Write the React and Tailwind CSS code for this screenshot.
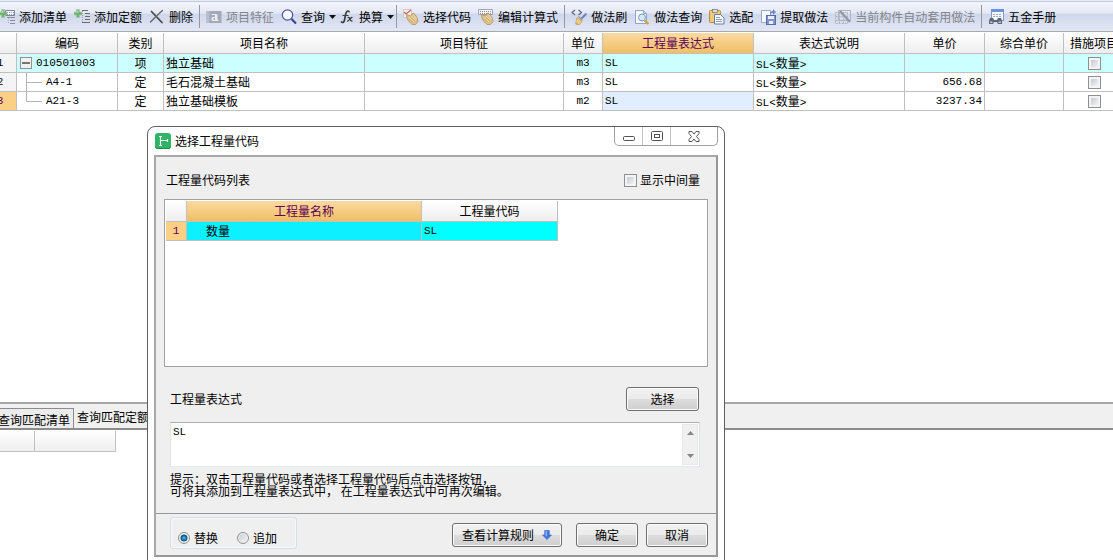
import { useState } from 'react'
import clsx from 'clsx'

// Toolbar icons
const AddListIcon = ({ plain }) => (
  <svg width="16" height="16" viewBox="0 0 16 16">
    {plain ? (
      <>
        <path d="M8 1.500h6 M11 4.500h5 M11 7.500h5 M11 10.500h5 M8 13.500h8" stroke="#6c6c6c" />
        <path d="M8.500 2v12" stroke="#a5a5a5" strokeDasharray="1 1" />
      </>
    ) : (
      <>
        <path d="M6.500 1.500h9v5h-9z" fill="#f4f6fb" stroke="#7d8494" />
        <path d="M8 3.500h7 M8 5.500h7" stroke="#8e95a6" strokeDasharray="1 1" />
        <path d="M8 8.500h8 M11 11.500h5 M11 14.500h5" stroke="#8a8f9c" />
        <path d="M9.500 9v6" stroke="#b5b9c4" strokeDasharray="1 1" />
      </>
    )}
    <path d="M2.500 0.500h3V3H8v3H5.500v2.500h-3V6H0V3h2.500z" fill="#6faf74" stroke="#a3cba5" strokeWidth="0.600" />
    <path d="M3 1.500h1.500V4H1V3.500h2z" fill="#a9d8ab" />
  </svg>
)

const DeleteIcon = () => (
  <svg width="16" height="16" viewBox="0 0 16 16" fill="none" strokeLinecap="round">
    <path d="M2.500 2.500L13 13.500" stroke="#4b4b4b" strokeWidth="1.800" />
    <path d="M13.500 1.500C9.500 5 5 9.500 1.500 13" stroke="#6b6b6b" strokeWidth="1.500" />
  </svg>
)

const FeatureIcon = () => (
  <svg width="16" height="16" viewBox="0 0 16 16">
    <rect x="0.500" y="2" width="15" height="12" fill="#a4a9b8" />
    <path d="M0.500 2h3v12h-3z" fill="#b9bdca" />
    <path d="M5.500 5h5l1 1v5h1v1h-6l-1-1V9l1-1h2.500V6h-3.500z M7.500 9v2h1.500V9z" fill="#eceef4" fillRule="evenodd" />
  </svg>
)

const SearchIcon = () => (
  <svg width="16" height="16" viewBox="0 0 16 16" fill="none">
    <circle cx="6.500" cy="6" r="5.200" fill="#f6f9ff" stroke="#4a50a8" strokeWidth="1.200" />
    <path d="M3.500 5.500A3 3 0 0 1 6.500 3" stroke="#fff" />
    <path d="M10.500 10l4.500 4.500" stroke="#343a94" strokeWidth="2" />
  </svg>
)

const FxIcon = () => (
  <svg width="16" height="16" viewBox="0 0 16 16" fill="none" stroke="#3d3d3d" strokeLinecap="round">
    <path d="M10 2.500C8 1.500 7 3 6.500 6L5.500 11C5 13.500 4 14 2.500 13" strokeWidth="1.700" />
    <path d="M4 6.500h5" strokeWidth="1.200" />
    <path d="M9 8.500c2-1 2 4 4 3.500 M13 8.500c-2 0-3 4-4.500 3.500" strokeWidth="1.300" />
  </svg>
)

const HandIcon = ({ keyboard }) => (
  <svg width="16" height="16" viewBox="0 0 16 16">
    {keyboard ? (
      <>
        <path d="M0.500 0.500h14v5h-14z" fill="#f2f4f8" stroke="#8d929e" strokeWidth="0.800" />
        <path d="M2 2.500h11 M2 4.500h11" stroke="#8a8f9c" strokeDasharray="1 1" />
      </>
    ) : (
      <>
        <path d="M0.500 0.500h8v8h-8z" fill="#f3eded" stroke="#c3b9b9" strokeWidth="0.600" />
        <path d="M1 3l2 2 5-4" fill="none" stroke="#d8604f" strokeWidth="1.200" />
      </>
    )}
    <path d="M3.500 5.500l4 1.500 2.500-3 2 1.500 2 3 1 4-2.500 3H9L5.500 12 4 9z" fill="#dfc08a" stroke="#ad8a52" strokeWidth="0.700" />
    <path d="M6 8.500l5 4.500 M8 7l4.500 4.500 M10.500 6l3 4" stroke="#f4e2bb" strokeWidth="0.800" />
    <path d="M6.500 10l3.500 3.500 M8 8.500l4 3.500" stroke="#ad8a52" strokeWidth="0.500" />
  </svg>
)

const BrushIcon = () => (
  <svg width="16" height="16" viewBox="0 0 16 16" fill="none">
    <path d="M4 1L1 3.500 4 6 M7.500 1l3 2.500-3 2.500" stroke="#5a6270" strokeWidth="1.100" />
    <path d="M15.500 4.500L10 10" stroke="#7283b8" strokeWidth="2" />
    <path d="M6 8.500l5 4-2.500 3H5.500l1-1.500-2 1z" fill="#efcb85" stroke="#c29a4f" strokeWidth="0.700" />
    <path d="M7.500 7.500l4 4" stroke="#9a9a9a" strokeWidth="1.500" />
  </svg>
)

const PageSearchIcon = () => (
  <svg width="16" height="16" viewBox="0 0 16 16">
    <path d="M1.500 1.500h8l3 3v10h-11z" fill="#f5f9ff" stroke="#8fa3c8" />
    <path d="M9.500 1.500v3h3" fill="#cbd9ef" stroke="#8fa3c8" />
    <circle cx="8" cy="8.500" r="3.500" fill="#d2eaf8" stroke="#7f97b5" />
    <path d="M10.500 11.500l4 3.500" stroke="#dc9a38" strokeWidth="2.200" />
  </svg>
)

const PasteIcon = () => (
  <svg width="16" height="16" viewBox="0 0 16 16">
    <rect x="0.500" y="1.500" width="11" height="12" rx="1" fill="#f0cb7a" stroke="#b58a3a" />
    <rect x="3.500" y="0.500" width="5" height="3" fill="#ddd" stroke="#777" strokeWidth="0.700" />
    <path d="M5.500 5.500h6l3.500 3.500v6H5.500z" fill="#f3f7fd" stroke="#6f7f9c" />
    <path d="M7 8.500h4 M7 10.500h6 M7 12.500h6" stroke="#8fa0be" />
  </svg>
)

const ExtractIcon = () => (
  <svg width="16" height="16" viewBox="0 0 16 16">
    <path d="M1.500 1.500h9v12h-9z" fill="#f5f8fe" stroke="#9aa8ca" />
    <rect x="6.500" y="6.500" width="9" height="9" fill="#8395cc" stroke="#5a6ba4" />
    <path d="M8 7h6v3H8z M9 12h4v3H9z" fill="#e9eefb" />
    <path d="M10 5c0-2 1-3 3-3V0l3 3-3 3V4c-1 0-2 0-3 1z" fill="#6f86c8" />
  </svg>
)

const AutoApplyIcon = () => (
  <svg width="16" height="16" viewBox="0 0 16 16" fill="none" stroke="#b0b2ba">
    <path d="M3.500 1.500h12v10h-12z" />
    <path d="M0.500 3.500h12v11h-12z M0.500 7.500h12 M0.500 11.500h12 M4.500 3.500v11 M8.500 3.500v11" strokeDasharray="2 1" />
    <path d="M5 2l10 11" stroke="#94979f" strokeWidth="2.200" />
  </svg>
)

const HandbookIcon = () => (
  <svg width="16" height="16" viewBox="0 0 16 16">
    <rect x="3.500" y="0.500" width="12" height="11" fill="#f3f7fd" stroke="#7f9bd0" />
    <path d="M3 0h13v3H3z" fill="#6f93d8" />
    <path d="M5 5.500h9 M5 7.500h9" stroke="#9cacca" strokeDasharray="2 1" />
    <path d="M2 9h3l1 2h3l1-2h3l1 3v3h-4l-1-2H6l-1 2H1v-3z" fill="#5c6675" />
    <path d="M2 12.500h2.500V14H2z M10.500 12.500H13V14h-2.500z" fill="#c3ccd9" />
  </svg>
)

const Caret = () => (
  <svg className="-mr-1" width="7" height="4" viewBox="0 0 7 4">
    <path d="M0 0h7L3.500 4z" fill="#111" />
  </svg>
)

const AppIcon = () => (
  <svg width="16" height="16" viewBox="0 0 16 16">
    <rect width="16" height="16" rx="3" fill="#2fb566" />
    <path d="M0 12.500A3 3 0 0 0 3 16h10a3 3 0 0 0 3-3.500A3 3 0 0 1 13 15H3a3 3 0 0 1-3-2.500z" fill="#1f8f4c" />
    <path d="M5.500 3v10 M4 3.500h3 M4 12.500h3 M5.500 7.500h7 M12.500 6v3" stroke="#f2fff6" strokeWidth="1.200" fill="none" />
  </svg>
)

const toolbar = [
  { label: '添加清单', icon: <AddListIcon /> },
  { label: '添加定额', icon: <AddListIcon plain /> },
  { label: '删除', icon: <DeleteIcon /> },
  null,
  { label: '项目特征', icon: <FeatureIcon />, disabled: true },
  { label: '查询', icon: <SearchIcon />, menu: true },
  { label: '换算', icon: <FxIcon />, menu: true },
  null,
  { label: '选择代码', icon: <HandIcon /> },
  { label: '编辑计算式', icon: <HandIcon keyboard /> },
  null,
  { label: '做法刷', icon: <BrushIcon /> },
  { label: '做法查询', icon: <PageSearchIcon /> },
  { label: '选配', icon: <PasteIcon /> },
  { label: '提取做法', icon: <ExtractIcon /> },
  { label: '当前构件自动套用做法', icon: <AutoApplyIcon />, disabled: true },
  null,
  { label: '五金手册', icon: <HandbookIcon /> }
]

const columns = [
  { title: '', width: 'w-[33px]' },
  { title: '编码', width: 'w-[101px]' },
  { title: '类别', width: 'w-[46px]' },
  { title: '项目名称', width: 'w-[201px]' },
  { title: '项目特征', width: 'w-[199px]' },
  { title: '单位', width: 'w-[39px]' },
  { title: '工程量表达式', width: 'w-[151px]', active: true },
  { title: '表达式说明', width: 'w-[151px]' },
  { title: '单价', width: 'w-[80px]' },
  { title: '综合单价', width: 'w-[79px]' },
  { title: '措施项目', width: 'w-[61px]' }
]

const rows = [
  { code: '010501003', type: '项', name: '独立基础', unit: 'm3', price: '', root: true },
  { code: 'A4-1', type: '定', name: '毛石混凝土基础', unit: 'm3', price: '656.68' },
  { code: 'A21-3', type: '定', name: '独立基础模板', unit: 'm2', price: '3237.34', last: true }
]

const headCell = 'border-r border-b border-[#c0c0c0] bg-linear-to-b from-white to-[#eeeeee] p-0 font-normal'
const activeHead = 'border-r border-b border-[#c0c0c0] bg-linear-to-b from-[#fbd9a0] to-[#f0bf62] p-0 font-normal text-[#5c0058]'
const cell = 'border-r border-b border-[#c0c0c0] px-0.5 py-0'
const mono = "font-['Liberation_Mono',monospace] text-[11px] leading-3"
const pushButton =
  'flex h-6 items-center justify-center rounded-[3px] border border-[#707070] bg-[linear-gradient(#f2f2f2_0%,#ebebeb_50%,#dddddd_50%,#cfcfcf_100%)] shadow-[inset_0_0_0_1px_#fafafa]'
const tick =
  'size-[13px] appearance-none border border-[#8e8f8f] bg-linear-to-br from-[#b9c0cc] to-[#ffffff] shadow-[inset_0_0_0_2px_#f4f4f4] checked:bg-[#4a5f97]'
const radio =
  'size-3 appearance-none rounded-full border border-[#8e8f8f] bg-linear-to-br from-[#c8cdd2] to-[#f6f6f6] shadow-[inset_0_0_0_1px_#f4f4f4] checked:bg-[radial-gradient(circle,#4fc3ee_0,#0b4f86_3px,#e8ecef_4px)]'

const Toolbar = () => (
  <div className="h-8 shrink-0 overflow-hidden border-b border-[#a9a9ad] bg-[linear-gradient(#f6f8fd_0%,#e3e8f5_42%,#cfd7eb_46%,#e2e7f5_100%)]">
    <div className="h-0.5 border-b border-[#c3cbe0] bg-[#e6ebf7]" />
    <div role="toolbar" className="-ml-px flex h-[29px] items-center gap-[7px]">
      {toolbar.map((item, index) =>
        item ? (
          <button
            key={item.label}
            type="button"
            disabled={item.disabled}
            className={clsx('flex shrink-0 items-center gap-1 whitespace-nowrap', item.disabled && 'text-[#85858a]')}
          >
            {item.icon}
            {item.label}
            {item.menu && <Caret />}
          </button>
        ) : (
          <div key={index} className="-mx-px h-[23px] w-px shrink-0 bg-[#98989c]" />
        )
      )}
    </div>
  </div>
)

const TreeCell = ({ row }) => {
  if (row.root) {
    return (
      <div className="flex h-[18px] items-center gap-1 pl-px">
        <button type="button" aria-label="折叠" className="shrink-0">
          <svg width="12" height="12" viewBox="0 0 12 12" className="block">
            <rect x="0.500" y="0.500" width="11" height="11" fill="#f0f0f0" stroke="#919191" />
            <path d="M2 6h8" stroke="#222" strokeWidth="1.200" />
          </svg>
        </button>
        <span className={mono}>{row.code}</span>
      </div>
    )
  }
  return (
    <div className="flex h-[18px] items-center gap-1 pl-[7px]">
      <svg width="16" height="18" viewBox="0 0 16 18" fill="none" stroke="#b4b4b4">
        <path d={row.last ? 'M0.500 0v9.500H16' : 'M0.500 0v18 M0.500 9.500H16'} />
      </svg>
      <span className={mono}>{row.code}</span>
    </div>
  )
}

const ItemTable = () => (
  <div className="min-h-0 flex-1 overflow-hidden pt-px">
    <table className="-ml-4 w-[1125px] min-w-full table-fixed border-separate border-spacing-0">
      <thead>
        <tr className="h-[21px]">
          {columns.map((col, index) => (
            <th key={index} className={clsx(col.width, 'whitespace-nowrap', col.active ? activeHead : headCell)}>
              {col.title}
            </th>
          ))}
        </tr>
      </thead>
      <tbody>
        {rows.map((row, index) => (
          <tr key={row.code} className={clsx('h-[19px]', row.root && 'bg-[#ccffff]')}>
            <th className={clsx(cell, mono, 'font-normal', row.last ? 'bg-[#fccf86] text-[#5c0058]' : 'bg-[#f4f4f4]')}>
              {index + 1}
            </th>
            <td className={cell}>
              <TreeCell row={row} />
            </td>
            <td className={clsx(cell, 'text-center')}>{row.type}</td>
            <td className={cell}>{row.name}</td>
            <td className={cell} />
            <td className={clsx(cell, mono, 'text-center')}>{row.unit}</td>
            <td className={clsx(cell, mono, row.last && 'bg-[#e0eeff]')}>SL</td>
            <td className={cell}>
              <span className={mono}>SL&lt;</span>数量<span className={mono}>&gt;</span>
            </td>
            <td className={clsx(cell, mono, 'text-right')}>{row.price}</td>
            <td className={cell} />
            <td className={cell}>
              <input type="checkbox" aria-label="措施项目" className={clsx(tick, 'mx-auto block')} />
            </td>
          </tr>
        ))}
      </tbody>
    </table>
  </div>
)

const QueryPanel = () => (
  <div className="h-[158px] shrink-0 border-t-2 border-[#a6a6a8]">
    <div className="flex h-[26px] items-end border-b-2 border-[#8c8c8e] bg-[#f0f0f0]">
      <button type="button" className="-ml-1 h-5 border-t border-r border-[#8c8c8e] bg-[#ececec] pt-0.5 pr-[3px] pl-0.5">
        查询匹配清单
      </button>
      <button type="button" className="h-6 px-[3px] pt-0.5">
        查询匹配定额
      </button>
    </div>
    <div className="flex h-[22px] pt-px">
      <div className={clsx(headCell, 'w-[35px]')} />
      <div className={clsx(headCell, 'w-[81px]')} />
    </div>
  </div>
)

const WindowButtons = () => (
  <div className="flex h-[19px] rounded-b-[5px] border border-t-0 border-[#a0a0a4]">
    <button type="button" aria-label="最小化" className="flex w-7 items-center justify-center border-r border-[#c4c4c8]">
      <svg width="12" height="5" viewBox="0 0 12 5" className="mt-1">
        <rect x="0.500" y="0.500" width="11" height="4" rx="1" fill="#fff" stroke="#50505e" />
      </svg>
    </button>
    <button type="button" aria-label="最大化" className="flex w-7 items-center justify-center border-r border-[#c4c4c8]">
      <svg width="12" height="10" viewBox="0 0 12 10" fill="#fff" stroke="#50505e">
        <rect x="0.500" y="0.500" width="11" height="9" rx="1" />
        <rect x="3.500" y="3.500" width="5" height="3" />
      </svg>
    </button>
    <button type="button" aria-label="关闭" className="flex w-[46px] items-center justify-center">
      <svg width="12" height="11" viewBox="0 0 12 11">
        <path
          d="M1 .500h3L6 3 8 .500h3v2L8.500 5.500 11 8.500v2H8L6 8l-2 2.500H1v-2l2.500-3L1 2.500z"
          fill="#fff"
          stroke="#50505e"
          strokeLinejoin="round"
        />
      </svg>
    </button>
  </div>
)

const CodeDialog = () => {
  const [mode, setMode] = useState('replace')
  const [expression, setExpression] = useState('SL')

  return (
    <div
      role="dialog"
      aria-labelledby="dialog-title"
      className="absolute top-[126px] left-[147px] w-[578px] rounded-t-lg border border-[#5f5f62] bg-white px-1.5 pb-1.5"
    >
      <div className="flex h-7 justify-between">
        <div className="flex items-center gap-1 pl-px">
          <AppIcon />
          <h2 id="dialog-title">选择工程量代码</h2>
        </div>
        <WindowButtons />
      </div>

      <div className="border-2 border-t-[#a8a8a8] border-r-[#979797] border-b-[#979797] border-l-[#a8a8a8] bg-[#efefef]">
        <div className="px-2 pt-[13px]">
          <div className="flex h-5 items-center justify-between pr-2 pl-0.5">
            <h3>工程量代码列表</h3>
            <label className="flex items-center gap-[3px]">
              <input type="checkbox" className={tick} />
              显示中间量
            </label>
          </div>

          <div className="mt-[9px] mb-5 h-[168px] border border-[#a2a2a6] bg-white p-px">
            <table className="table-fixed border-separate border-spacing-0">
              <thead>
                <tr className="h-[21px]">
                  <th className={clsx(headCell, 'w-[21px]')} />
                  <th className={clsx(activeHead, 'w-[235px]')}>工程量名称</th>
                  <th className={clsx(headCell, 'w-[136px]')}>工程量代码</th>
                </tr>
              </thead>
              <tbody>
                <tr className="h-[19px]">
                  <th className={clsx(cell, mono, 'bg-[#fccf86] font-normal text-[#5c0058]')}>1</th>
                  <td className={clsx(cell, 'bg-[#0cf0ff]')}>
                    <span className="pl-[17px]">数量</span>
                  </td>
                  <td className={clsx(cell, mono, 'bg-[#00ffff]')}>SL</td>
                </tr>
              </tbody>
            </table>
          </div>

          <div className="flex h-6 items-center justify-between pr-[9px] pl-1.5">
            <label htmlFor="expression">工程量表达式</label>
            <button type="button" className={clsx(pushButton, 'w-[73px]')}>
              选择
            </button>
          </div>

          <div className="mt-[11px] mr-2 ml-1.5 flex h-[45px] border border-t-[#abadb3] border-r-[#dbdfe6] border-b-[#e3e9ef] border-l-[#e2e3ea] bg-white p-px">
            <textarea
              id="expression"
              value={expression}
              onChange={(e) => setExpression(e.target.value)}
              className={clsx(mono, 'min-w-0 flex-1 resize-none px-px py-0.5 outline-none')}
            />
            <div className="flex w-4 flex-col items-center justify-between border border-[#e8e8e8] bg-[#f0f0f0] py-1.5">
              <button type="button" aria-label="向上">
                <svg width="7" height="4" viewBox="0 0 7 4" className="block">
                  <path d="M0 4h7L3.500 0z" fill="#868686" />
                </svg>
              </button>
              <button type="button" aria-label="向下">
                <svg width="7" height="4" viewBox="0 0 7 4" className="block">
                  <path d="M0 0h7L3.500 4z" fill="#868686" />
                </svg>
              </button>
            </div>
          </div>

          <p className="mt-1.5 mb-4 ml-1.5 leading-3">
            提示：双击工程量代码或者选择工程量代码后点击选择按钮，
            <br />
            可将其添加到工程量表达式中， 在工程量表达式中可再次编辑。
          </p>
        </div>

        <div className="flex items-center justify-between border-t border-[#979797] pt-[3px] pr-2 pb-1.5 pl-3.5">
          <div className="flex h-8 w-[127px] items-end gap-[19px] rounded-[3px] border border-[#d3dee8] pb-0.5 pl-[7px] shadow-[inset_0_0_0_1px_#f8f8f8]">
            <label className="flex items-center gap-1">
              <input
                type="radio"
                name="mode"
                className={radio}
                checked={mode === 'replace'}
                onChange={() => setMode('replace')}
              />
              替换
            </label>
            <label className="flex items-center gap-1">
              <input
                type="radio"
                name="mode"
                className={radio}
                checked={mode === 'append'}
                onChange={() => setMode('append')}
              />
              追加
            </label>
          </div>
          <div className="flex pt-1">
            <button type="button" className={clsx(pushButton, 'mr-3.5 w-[110px] gap-2')}>
              查看计算规则
              <svg width="10" height="10" viewBox="0 0 11 11">
                <path d="M3 .500h5v5h2.500L5.500 10.500.500 5.500H3z" fill="#3f78e6" stroke="#2a55b8" strokeWidth="0.600" />
                <path d="M4 1h1.500v6H4z" fill="#8db4f7" />
              </svg>
            </button>
            <button type="button" className={clsx(pushButton, 'mr-2 w-[62px]')}>
              确定
            </button>
            <button type="button" className={clsx(pushButton, 'w-[62px]')}>
              取消
            </button>
          </div>
        </div>
      </div>
    </div>
  )
}

export default function App() {
  return (
    <div className="relative flex h-screen flex-col overflow-hidden bg-white font-['Noto_Sans_CJK_SC',sans-serif] text-[12px] leading-4 text-black">
      <Toolbar />
      <ItemTable />
      <QueryPanel />
      <CodeDialog />
    </div>
  )
}
